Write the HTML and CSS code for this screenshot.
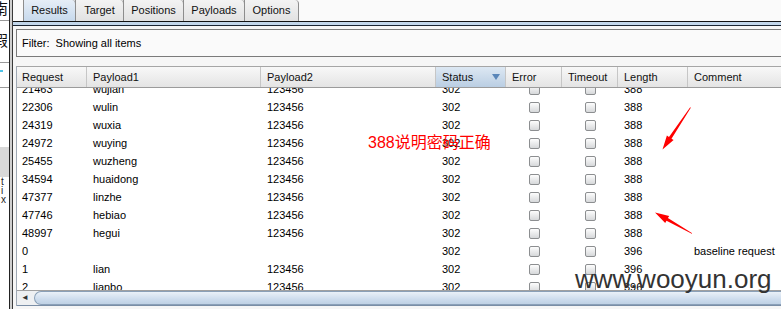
FILE: index.html
```html
<!DOCTYPE html>
<html lang="zh">
<head>
    <meta charset="UTF-8">
    <title>Intruder results</title>
    <link rel="stylesheet" href="styles.css">
</head>
<body>
    <div class="window">
        <!-- край соседнего окна -->
        <div class="side">
            <div class="side-ch ch-top">南</div>
            <div class="side-line"></div>
            <div class="side-ch ch-mid">假</div>
            <div class="side-line l2"></div>
            <div class="side-mark"></div>
            <div class="side-line l3"></div>
            <div class="side-gray"></div>
            <div class="side-small">t</div>
            <div class="side-small">i</div>
            <div class="side-small">x</div>
        </div>
        <div class="split"></div>

        <div class="main">
            <ul class="tabs">
                <li class="tab tab-results active">Results</li>
                <li class="tab tab-target">Target</li>
                <li class="tab tab-positions">Positions</li>
                <li class="tab tab-payloads">Payloads</li>
                <li class="tab tab-options">Options</li>
            </ul>
            <div class="tabline"></div>

            <div class="panel">
                <div class="filter">Filter:&nbsp; Showing all items</div>

                <div class="table">
                    <div class="thead">
                        <div class="th">Request</div>
                        <div class="th">Payload1</div>
                        <div class="th">Payload2</div>
                        <div class="th sorted">Status
                            <svg class="sort" width="8" height="6" viewBox="0 0 8 6"><polygon points="0,0 8,0 4,6" fill="#5a86b8"/></svg>
                        </div>
                        <div class="th">Error</div>
                        <div class="th">Timeout</div>
                        <div class="th">Length</div>
                        <div class="th">Comment</div>
                    </div>

                    <div class="tbody">
                        <div class="tr first"><div class="td">21463</div><div class="td">wujian</div><div class="td">123456</div><div class="td">302</div><div class="td box"><span class="cb"></span></div><div class="td box"><span class="cb"></span></div><div class="td">388</div><div class="td"></div></div>
                        <div class="tr"><div class="td">22306</div><div class="td">wulin</div><div class="td">123456</div><div class="td">302</div><div class="td box"><span class="cb"></span></div><div class="td box"><span class="cb"></span></div><div class="td">388</div><div class="td"></div></div>
                        <div class="tr"><div class="td">24319</div><div class="td">wuxia</div><div class="td">123456</div><div class="td">302</div><div class="td box"><span class="cb"></span></div><div class="td box"><span class="cb"></span></div><div class="td">388</div><div class="td"></div></div>
                        <div class="tr"><div class="td">24972</div><div class="td">wuying</div><div class="td">123456</div><div class="td">302</div><div class="td box"><span class="cb"></span></div><div class="td box"><span class="cb"></span></div><div class="td">388</div><div class="td"></div></div>
                        <div class="tr"><div class="td">25455</div><div class="td">wuzheng</div><div class="td">123456</div><div class="td">302</div><div class="td box"><span class="cb"></span></div><div class="td box"><span class="cb"></span></div><div class="td">388</div><div class="td"></div></div>
                        <div class="tr"><div class="td">34594</div><div class="td">huaidong</div><div class="td">123456</div><div class="td">302</div><div class="td box"><span class="cb"></span></div><div class="td box"><span class="cb"></span></div><div class="td">388</div><div class="td"></div></div>
                        <div class="tr"><div class="td">47377</div><div class="td">linzhe</div><div class="td">123456</div><div class="td">302</div><div class="td box"><span class="cb"></span></div><div class="td box"><span class="cb"></span></div><div class="td">388</div><div class="td"></div></div>
                        <div class="tr"><div class="td">47746</div><div class="td">hebiao</div><div class="td">123456</div><div class="td">302</div><div class="td box"><span class="cb"></span></div><div class="td box"><span class="cb"></span></div><div class="td">388</div><div class="td"></div></div>
                        <div class="tr"><div class="td">48997</div><div class="td">hegui</div><div class="td">123456</div><div class="td">302</div><div class="td box"><span class="cb"></span></div><div class="td box"><span class="cb"></span></div><div class="td">388</div><div class="td"></div></div>
                        <div class="tr"><div class="td">0</div><div class="td"></div><div class="td"></div><div class="td">302</div><div class="td box"><span class="cb"></span></div><div class="td box"><span class="cb"></span></div><div class="td">396</div><div class="td">baseline request</div></div>
                        <div class="tr"><div class="td">1</div><div class="td">lian</div><div class="td">123456</div><div class="td">302</div><div class="td box"><span class="cb"></span></div><div class="td box"><span class="cb"></span></div><div class="td">396</div><div class="td"></div></div>
                        <div class="tr"><div class="td">2</div><div class="td">lianbo</div><div class="td">123456</div><div class="td">302</div><div class="td box"><span class="cb"></span></div><div class="td box"><span class="cb"></span></div><div class="td">396</div><div class="td"></div></div>
                    </div>

                    <!-- горизонтальная прокрутка -->
                    <div class="hscroll">
                        <div class="scroll-btn">&#9668;</div>
                        <div class="thumb"></div>
                    </div>
                </div>
            </div>
        </div>
    </div>

    <!-- пометки поверх скриншота -->
    <div class="note">388说明密码正确</div>
    <svg class="arrows" width="781" height="309" viewBox="0 0 781 309">
        <polygon points="690.2,107.3 690.8,107.7 671.5,138.7 673.6,140.1 662.5,149.5 666.9,135.6 669.0,137.0" fill="#f00"/>
        <polygon points="691.8,233.8 692.2,233.2 667.9,218.1 669.2,215.9 655,212.5 665.2,222.9 666.5,220.7" fill="#f00"/>
    </svg>
    <div class="watermark">www.wooyun.org</div>
</body>
</html>
```

FILE: styles.css
```css
body {
    margin: 0;
    width: 781px;
    height: 309px;
    overflow: hidden;
    position: relative;
    background-color: #ececec;
    font-family: "Liberation Sans", Arial, sans-serif;
    font-size: 11px;
    color: #000;
}

.window {
    display: flex;
    height: 309px;
}

/* Кусок соседнего окна слева */
.side {
    flex: none;
    width: 9px;
    background-color: #fff;
    border-right: 1px solid #222;
    overflow: hidden;
    display: flex;
    flex-direction: column;
}

.side-ch {
    font-family: "Noto Sans CJK SC", sans-serif;
    font-size: 15px;
    line-height: 16px;
    margin-left: -7px;
    color: #111;
}

.ch-top {
    margin-top: 0;
}

.side-line {
    height: 1px;
    margin-top: 4px;
    background-color: #9a9a9a;
}

.ch-mid {
    margin-top: 11px;
}

.side-line.l2 {
    margin-top: 14px;
}

.side-mark {
    width: 3px;
    height: 2px;
    margin-top: 7px;
    background-color: #4fc3e8;
}

.side-line.l3 {
    margin-top: 15px;
}

.side-gray {
    height: 30px;
    margin-top: 59px;
    background-color: #d8d8d8;
}

.side-small {
    font-size: 10px;
    line-height: 9px;
    margin-left: 1px;
    color: #222;
}

.side-small:first-of-type {
    margin-top: 8px;
}

.split {
    flex: none;
    width: 2px;
    background-color: #cfcfcf;
}

.main {
    flex: none;
    width: 800px;
    border-left: 1px solid #3a3a3a;
    background-color: #f6f6f6;
}

/* Вкладки */
.tabs {
    display: flex;
    list-style: none;
    margin: 0;
    padding: 0 0 0 10px;
    height: 21px;
    background-color: #fafafa;
}

.tab {
    box-sizing: border-box;
    height: 21px;
    margin-right: -1px;
    border: 1px solid #8d8d8d;
    border-top: none;
    border-bottom: none;
    border-radius: 0 4px 0 0;
    background: linear-gradient(#f3f3f3, #e2e2e2);
    text-align: center;
    line-height: 21px;
    color: #111;
}

.tab.active {
    background: linear-gradient(#e6eef7, #c7d9ec);
}

.tab-results { width: 53px; }
.tab-target { width: 49px; }
.tab-positions { width: 61px; }
.tab-payloads { width: 62px; }
.tab-options { width: 55px; }

.tabline {
    height: 3px;
    border-top: 1px solid #111;
    border-bottom: 1px solid #1b2533;
    background-color: #c2d6ea;
}

.panel {
    padding: 3px 0 0 3px;
    background-color: #f6f6f6;
    height: 283px;
}

.filter {
    height: 26px;
    line-height: 26px;
    padding-left: 5px;
    border: 1px solid #7b7b7b;
    background-color: #fafafa;
}

/* Таблица результатов */
.table {
    margin-top: 9px;
    border-top: 1px solid #a6a6a6;
    border-left: 1px solid #9fa9b5;
    background-color: #fff;
}

.thead,
.tr {
    display: grid;
    grid-template-columns: 70px 174px 175px 70px 56px 56px 70px 1fr;
}

.thead {
    height: 20px;
    border-bottom: 1px solid #9b9b9b;
}

.th {
    display: flex;
    align-items: center;
    padding-left: 6px;
    border-right: 1px solid #c6c6c6;
    background: linear-gradient(#f8f8f8, #e4e4e4);
    color: #111;
}

.th:first-child {
    padding-left: 5px;
}

.th.sorted {
    background: linear-gradient(#dde8f3, #bacee3);
}

.th .sort {
    margin-left: auto;
    margin-right: 5px;
}

.tbody {
    height: 202px;
    overflow: hidden;
}

.tr {
    height: 18px;
}

.tr.first {
    margin-top: -8px;
}

.td {
    display: flex;
    align-items: center;
    padding-left: 6px;
    white-space: nowrap;
}

.td:first-child {
    padding-left: 5px;
}

.td.box {
    justify-content: center;
    padding-left: 0;
}

.cb {
    box-sizing: border-box;
    width: 11px;
    height: 11px;
    border: 1px solid #8c8e90;
    border-radius: 2px;
    background: linear-gradient(#fdfdfd, #d6d8da);
}

.hscroll {
    display: flex;
    height: 14px;
    border-top: 1px solid #a0a0a0;
    border-bottom: 1px solid #7a8ea6;
    background-color: #eef0f2;
}

.scroll-btn {
    width: 17px;
    font-size: 8px;
    line-height: 14px;
    padding-left: 4px;
    box-sizing: border-box;
    color: #333;
}

.thumb {
    flex: 1;
    border: 1px solid #8aa0b8;
    border-right: none;
    border-radius: 7px 0 0 7px;
    background: linear-gradient(#eaf1f8, #cddced 60%, #bfd1e4);
}

/* Пометки поверх */
.note {
    position: absolute;
    left: 368px;
    top: 134px;
    font-family: "Liberation Sans", "Noto Sans CJK SC", sans-serif;
    font-size: 16px;
    line-height: 18px;
    color: #f00;
    white-space: nowrap;
}

.arrows {
    position: absolute;
    left: 0;
    top: 0;
    pointer-events: none;
}

.watermark {
    position: absolute;
    left: 575px;
    top: 266px;
    font-family: "Liberation Sans", Arial, sans-serif;
    font-size: 26px;
    line-height: 26px;
    color: #333;
    white-space: nowrap;
}
```
